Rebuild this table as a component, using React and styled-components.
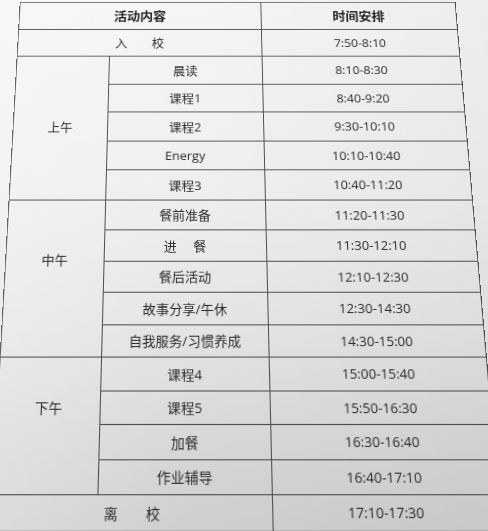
import styled, { createGlobalStyle } from 'styled-components'

const GlobalStyle = createGlobalStyle`
  html, body {
    margin: 0;
    padding: 0;
    background: #e9e7e8;
  }
`

const schedule = [
  {
    period: '上午',
    lift: 0,
    items: [
      ['晨读', '8:10-8:30'],
      ['课程1', '8:40-9:20'],
      ['课程2', '9:30-10:10'],
      ['Energy', '10:10-10:40'],
      ['课程3', '10:40-11:20'],
    ],
  },
  {
    period: '中午',
    lift: 34,
    items: [
      ['餐前准备', '11:20-11:30'],
      ['进\u3000 餐', '11:30-12:10'],
      ['餐后活动', '12:10-12:30'],
      ['故事分享/午休', '12:30-14:30'],
      ['自我服务/习惯养成', '14:30-15:00'],
    ],
  },
  {
    period: '下午',
    lift: 32,
    items: [
      ['课程4', '15:00-15:40'],
      ['课程5', '15:50-16:30'],
      ['加餐', '16:30-16:40'],
      ['作业辅导', '16:40-17:10'],
    ],
  },
]

function App() {
  return (
    <Page>
      <GlobalStyle />
      <Table>
        <Cell $span={2} $bold>活动内容</Cell>
        <Cell $bold>时间安排</Cell>

        <Cell $span={2}>{'入\u3000\u3000校'}</Cell>
        <Cell>7:50-8:10</Cell>

        {schedule.map((block) => [
          <Cell key={block.period} $rows={block.items.length} $lift={block.lift}>
            {block.period}
          </Cell>,
          ...block.items.flatMap(([name, time]) => [
            <Cell key={name}>{name}</Cell>,
            <Cell key={name + time}>{time}</Cell>,
          ]),
        ])}

        <Cell $span={2}>{'离\u3000\u3000校'}</Cell>
        <Cell>17:10-17:30</Cell>
      </Table>
    </Page>
  )
}

const Page = styled.div`
  width: 488px;
  height: 531px;
  overflow: hidden;
  background:
    linear-gradient(90deg, rgba(255, 255, 255, 0.25) 0%, rgba(255, 255, 255, 0) 40%, rgba(0, 0, 0, 0.03) 100%),
    linear-gradient(180deg, #f6f5f5 0%, #f0eeef 35%, #e6e3e4 62%, #dad7d8 82%, #d0cdce 100%);
`

// the sheet is photographed at a slight angle, so the grid sits on a tilted plane
const Table = styled.div`
  width: 470px;
  margin-left: 6px;
  display: grid;
  grid-template-columns: 97.5px 162px 1fr;
  grid-auto-rows: 31.5px;
  border-top: 1.5px solid #5a5a5a;
  border-left: 1.5px solid #666;
  transform-origin: 184px 50%;
  transform: translateY(-23px) perspective(650px) rotateX(11.3deg);
  font-family: "Open Sans", "Noto Sans CJK SC", sans-serif;
  font-size: 13px;
  color: #2b2b2b;
`

const Cell = styled.div`
  display: flex;
  align-items: center;
  justify-content: center;
  box-sizing: border-box;
  white-space: pre;
  grid-column: ${(p) => (p.$span ? `span ${p.$span}` : 'auto')};
  grid-row: ${(p) => (p.$rows ? `span ${p.$rows}` : 'auto')};
  padding-bottom: ${(p) => p.$lift || 0}px;
  border-right: 1.5px solid #4e4e4e;
  border-bottom: 1.5px solid #4e4e4e;
  font-weight: ${(p) => (p.$bold ? 700 : 400)};
  font-size: ${(p) => (p.$bold ? '14px' : 'inherit')};
  color: ${(p) => (p.$bold ? '#222' : 'inherit')};
`

export default App
